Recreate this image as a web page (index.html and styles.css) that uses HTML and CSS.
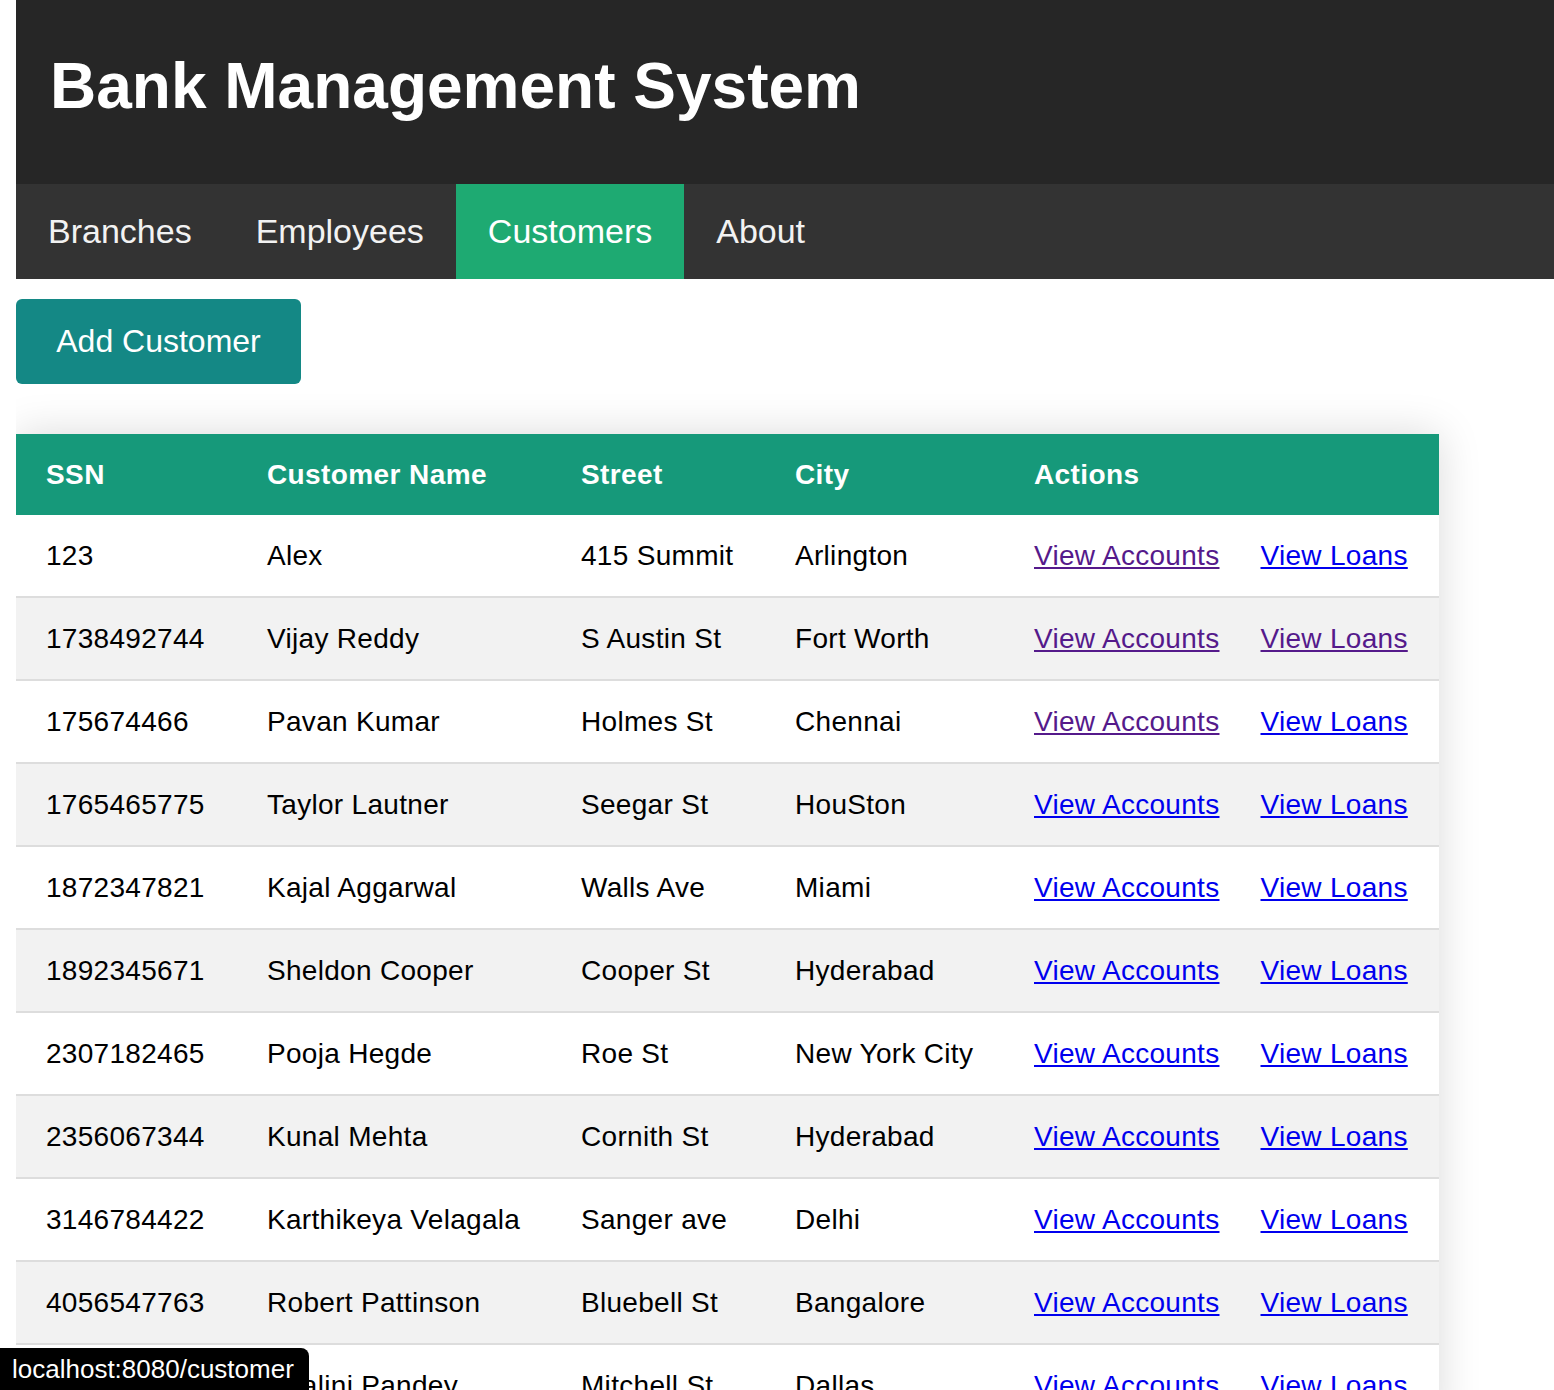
FILE: index.html
```html
<!DOCTYPE html>
<html lang="en">
<head>
<meta charset="utf-8">
<title>Bank Management System - Customers</title>
<link rel="stylesheet" href="styles.css">
</head>
<body>
<header class="site-header">
  <h1 class="site-title">Bank Management System</h1>
</header>
<nav class="main-nav">
  <a class="nav-link" href="#">Branches</a>
  <a class="nav-link" href="#">Employees</a>
  <a class="nav-link nav-link-active" href="#">Customers</a>
  <a class="nav-link" href="#">About</a>
</nav>
<main class="content">
  <div class="toolbar">
    <button class="btn-add" type="button">Add Customer</button>
  </div>
  <table class="data-table">
    <colgroup>
      <col class="col-ssn">
      <col class="col-name">
      <col class="col-street">
      <col class="col-city">
      <col class="col-actions">
    </colgroup>
    <thead>
      <tr>
        <th>SSN</th>
        <th>Customer Name</th>
        <th>Street</th>
        <th>City</th>
        <th>Actions</th>
      </tr>
    </thead>
    <tbody>
      <tr><td>123</td><td>Alex</td><td>415 Summit</td><td>Arlington</td><td class="actions"><a class="link visited" href="#">View Accounts</a><a class="link" href="#">View Loans</a></td></tr>
      <tr><td>1738492744</td><td>Vijay Reddy</td><td>S Austin St</td><td>Fort Worth</td><td class="actions"><a class="link visited" href="#">View Accounts</a><a class="link visited" href="#">View Loans</a></td></tr>
      <tr><td>175674466</td><td>Pavan Kumar</td><td>Holmes St</td><td>Chennai</td><td class="actions"><a class="link visited" href="#">View Accounts</a><a class="link" href="#">View Loans</a></td></tr>
      <tr><td>1765465775</td><td>Taylor Lautner</td><td>Seegar St</td><td>HouSton</td><td class="actions"><a class="link" href="#">View Accounts</a><a class="link" href="#">View Loans</a></td></tr>
      <tr><td>1872347821</td><td>Kajal Aggarwal</td><td>Walls Ave</td><td>Miami</td><td class="actions"><a class="link" href="#">View Accounts</a><a class="link" href="#">View Loans</a></td></tr>
      <tr><td>1892345671</td><td>Sheldon Cooper</td><td>Cooper St</td><td>Hyderabad</td><td class="actions"><a class="link" href="#">View Accounts</a><a class="link" href="#">View Loans</a></td></tr>
      <tr><td>2307182465</td><td>Pooja Hegde</td><td>Roe St</td><td>New York City</td><td class="actions"><a class="link" href="#">View Accounts</a><a class="link" href="#">View Loans</a></td></tr>
      <tr><td>2356067344</td><td>Kunal Mehta</td><td>Cornith St</td><td>Hyderabad</td><td class="actions"><a class="link" href="#">View Accounts</a><a class="link" href="#">View Loans</a></td></tr>
      <tr><td>3146784422</td><td>Karthikeya Velagala</td><td>Sanger ave</td><td>Delhi</td><td class="actions"><a class="link" href="#">View Accounts</a><a class="link" href="#">View Loans</a></td></tr>
      <tr><td>4056547763</td><td>Robert Pattinson</td><td>Bluebell St</td><td>Bangalore</td><td class="actions"><a class="link" href="#">View Accounts</a><a class="link" href="#">View Loans</a></td></tr>
      <tr><td>4312987650</td><td>Shalini Pandey</td><td>Mitchell St</td><td>Dallas</td><td class="actions"><a class="link" href="#">View Accounts</a><a class="link" href="#">View Loans</a></td></tr>
    </tbody>
  </table>
</main>
<div class="status-bubble">localhost:8080/customer</div>
</body>
</html>
```

FILE: styles.css
```css
html, body {
  background: #ffffff;
}

body {
  margin: 0 0 0 16px;
  font-family: "Liberation Sans", Arial, Helvetica, sans-serif;
  color: #000000;
}

.site-header {
  background: #262626;
  padding: 49px 34px 61px;
}

.site-title {
  margin: 0;
  font-size: 64px;
  line-height: 74px;
  font-weight: 700;
  color: #ffffff;
}

.main-nav {
  display: flex;
  background: #333333;
  height: 95px;
}

.nav-link {
  display: block;
  padding: 0 32px;
  line-height: 95px;
  font-size: 34px;
  color: #f2f2f2;
  text-decoration: none;
}

.nav-link-active {
  background: #1eaa72;
  color: #ffffff;
}

.content {
  padding-top: 20px;
}

.toolbar {
  display: flex;
  margin-bottom: 50px;
}

.btn-add {
  background: #148885;
  color: #ffffff;
  border: none;
  border-radius: 6px;
  font-family: "Liberation Sans", Arial, Helvetica, sans-serif;
  font-size: 32px;
  line-height: 37px;
  padding: 24px 40px;
  width: 285px;
  height: 85px;
  cursor: pointer;
}

.data-table {
  border-collapse: collapse;
  width: 1423px;
  table-layout: fixed;
  box-shadow: 0 0 40px rgba(0, 0, 0, 0.15);
  font-size: 28px;
}

.col-ssn { width: 221px; }
.col-name { width: 314px; }
.col-street { width: 214px; }
.col-city { width: 239px; }
.col-actions { width: 435px; }

.data-table th {
  background: #16997a;
  color: #ffffff;
  font-weight: 700;
  text-align: left;
  padding: 24px 0 24px 30px;
  line-height: 33px;
  letter-spacing: 0.4px;
  white-space: nowrap;
}

.data-table td {
  padding: 24px 0 24px 30px;
  line-height: 33px;
  letter-spacing: 0.3px;
  border-bottom: 2px solid #dddddd;
  white-space: nowrap;
}

.data-table tbody tr:nth-child(odd) td {
  background: #ffffff;
}

.data-table tbody tr:nth-child(even) td {
  background: #f2f2f2;
}

.link {
  color: #0000ee;
  text-decoration: underline;
}

.link + .link {
  margin-left: 41px;
}

.link.visited {
  color: #551a8b;
}

.status-bubble {
  position: fixed;
  left: 0;
  bottom: 0;
  width: 309px;
  height: 42px;
  box-sizing: border-box;
  background: #000000;
  color: #ffffff;
  border-top-right-radius: 8px;
  font-size: 26px;
  line-height: 42px;
  padding-left: 12px;
  white-space: nowrap;
}
```
